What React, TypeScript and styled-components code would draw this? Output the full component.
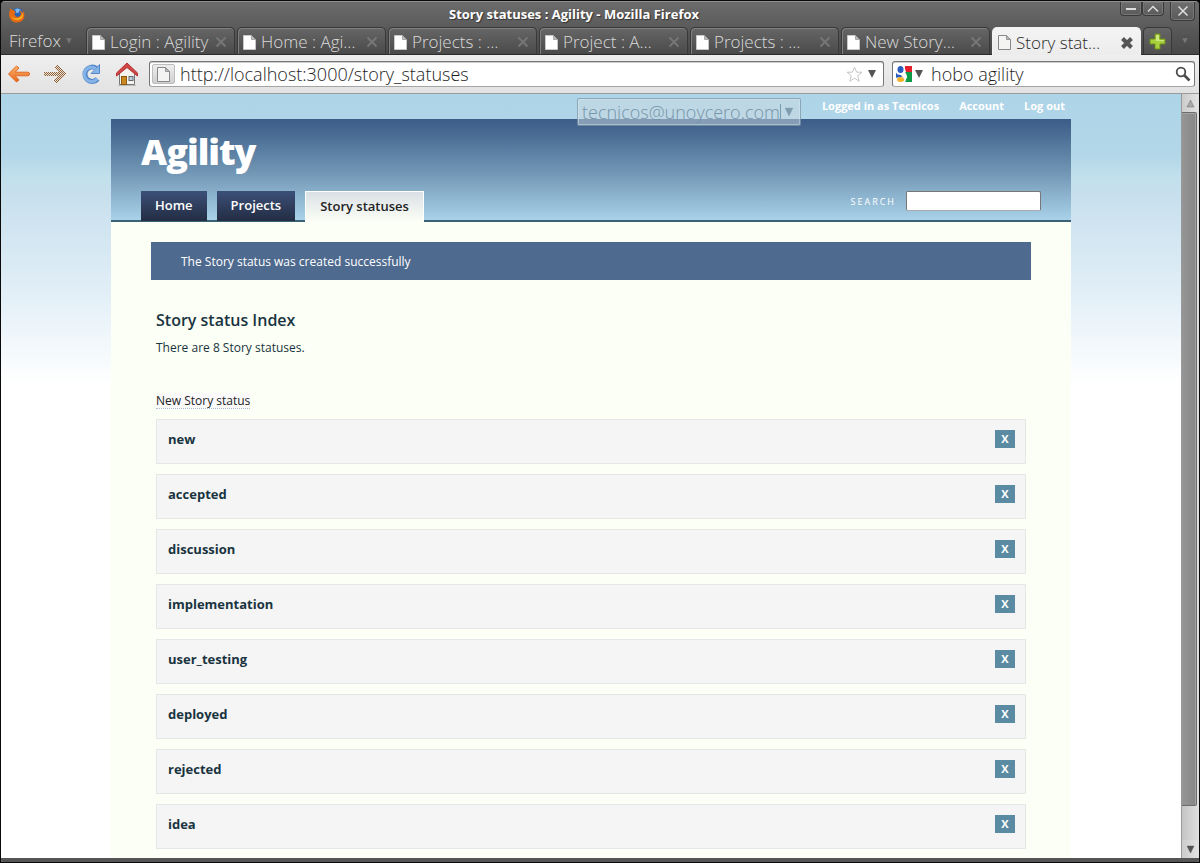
import React from "react";
import styled, { createGlobalStyle } from "styled-components";

const chromeFont = `"Open Sans", "Noto Sans", sans-serif`;
const pageFont = `"Open Sans", "Noto Sans", sans-serif`;

const GlobalStyle = createGlobalStyle`
  *, *::before, *::after { box-sizing: border-box; }
  body { margin: 0; background: #000; }
  button, input, select { font: inherit; }
`;

/* ---------- Browser window ---------- */

const Window = styled.div`
  display: flex;
  flex-direction: column;
  min-height: 100vh;
  border: 1px solid #0a0a0a;
  border-radius: 5px 5px 3px 3px;
  background: #555;
  overflow: hidden;
  font-family: ${chromeFont};
  font-size: 17px;
  font-weight: 300;
`;

const TitleBar = styled.header`
  display: grid;
  grid-template-columns: 100px 1fr 152px;
  align-items: center;
  height: 26px;
  border-top: 1px solid #8e8e8e;
  background: linear-gradient(#6b6b6b, #5b5b5b);
`;

const FirefoxMark = styled.svg`
  width: 16px;
  height: 16px;
  margin-left: 8px;
`;

const WindowTitle = styled.h1`
  margin: 0;
  padding-bottom: 2px;
  font-size: 13px;
  line-height: 20px;
  font-weight: 700;
  color: #fff;
  text-align: center;
  text-shadow: 1px 1px 1px #333;
`;

const WindowButtons = styled.div`
  display: flex;
  align-self: start;
  justify-content: flex-end;
  padding-right: 4px;
`;

const WindowButton = styled.button<{ $close?: boolean }>`
  display: flex;
  align-items: center;
  justify-content: center;
  width: ${(p) => (p.$close ? 25 : 22)}px;
  height: ${(p) => (p.$close ? 19 : 14)}px;
  margin-left: ${(p) => (p.$close ? 6 : 0)}px;
  padding: 0;
  border: 1px solid #3a3a3a;
  border-top: 0;
  border-radius: 0 0 4px 4px;
  background: linear-gradient(#6e6e6e, #5a5a5a);
  box-shadow: inset 0 0 0 1px #777;
`;

const TabStrip = styled.nav`
  display: flex;
  align-items: flex-end;
  height: 28px;
  padding-right: 4px;
  background: linear-gradient(#5a5a5a, #484848);
  border-bottom: 1px solid #2c2c2c;
`;

const MenuButton = styled.button`
  display: flex;
  align-items: center;
  gap: 4px;
  width: 85px;
  height: 27px;
  padding: 0 0 0 8px;
  border: 0;
  background: none;
  color: #dcdcdc;
`;

const Tabs = styled.div`
  display: flex;
  flex: 1;
  gap: 2px;
`;

const Tab = styled.div<{ $active?: boolean }>`
  display: flex;
  flex: 1 1 0;
  align-items: center;
  min-width: 0;
  height: ${(p) => (p.$active ? 28 : 27)}px;
  margin-bottom: ${(p) => (p.$active ? -1 : 0)}px;
  padding: 2px 6px 0 4px;
  border: 1px solid ${(p) => (p.$active ? "#f2f2f2" : "#383838")};
  border-bottom: 0;
  border-radius: 5px 5px 0 0;
  background: ${(p) => (p.$active ? "linear-gradient(#f4f4f4, #ececec)" : "linear-gradient(#666, #4a4a4a)")};
  box-shadow: ${(p) => (p.$active ? "none" : "inset 1px 1px 0 #808080")};
  color: ${(p) => (p.$active ? "#2b2b2b" : "#dadada")};
`;

const TabLink = styled.a`
  display: flex;
  flex: 1;
  align-items: center;
  gap: 4px;
  min-width: 0;
  color: inherit;
  text-decoration: none;
  white-space: nowrap;
  line-height: 22px;
`;

const PaperMark = styled.svg`
  flex-shrink: 0;
  width: 15px;
  height: 17px;
`;

const TabClose = styled.button`
  display: flex;
  width: 14px;
  height: 14px;
  padding: 0;
  border: 0;
  background: none;
`;

const StripButton = styled.button<{ $plain?: boolean }>`
  display: flex;
  align-items: center;
  justify-content: center;
  width: ${(p) => (p.$plain ? 21 : 29)}px;
  height: 27px;
  margin-left: 2px;
  padding: 0;
  border: ${(p) => (p.$plain ? "0" : "1px solid #383838")};
  border-bottom: 0;
  border-radius: 5px 5px 0 0;
  background: ${(p) => (p.$plain ? "none" : "linear-gradient(#666, #4e4e4e)")};
`;

const Toolbar = styled.div`
  display: flex;
  align-items: center;
  height: 39px;
  padding: 0 4px;
  border-bottom: 1px solid #9b9b9b;
  background: linear-gradient(#efefef, #e2e2e2);
`;

const ToolButton = styled.button`
  display: flex;
  align-items: center;
  justify-content: center;
  width: 24px;
  height: 28px;
  margin: 0 10px 0 2px;
  padding: 0;
  border: 0;
  background: none;
`;

const Field = styled.div<{ $grow: number }>`
  display: flex;
  flex: ${(p) => p.$grow} 1 0;
  align-items: center;
  min-width: 0;
  height: 26px;
  padding: 0 3px 0 2px;
  border: 1px solid #777;
  border-bottom-color: #a5a5a5;
  border-radius: 3px;
  background: #fff;
  box-shadow: inset 0 1px 0 #ccc;

  & + & { margin-left: 8px; }
`;

const FieldInput = styled.input`
  flex: 1;
  min-width: 0;
  height: 24px;
  padding: 0 0 0 5px;
  border: 0;
  outline: 0;
  background: none;
  color: #1e1e1e;
  font-size: 18px;
`;

const SiteBadge = styled.span`
  display: flex;
  align-items: center;
  justify-content: center;
  width: 23px;
  height: 20px;
  border: 1px solid #bdbdbd;
  border-radius: 2px;
  background: linear-gradient(#eee, #cfcfcf);
`;

const IconButton = styled.button`
  display: flex;
  align-items: center;
  padding: 0 0 0 1px;
  border: 0;
  background: none;
`;

/* ---------- Viewport ---------- */

const Viewport = styled.div`
  display: flex;
  flex: 1;
  padding-right: 1px;
  border-bottom: 4px solid #555;
  background: #e0e0e0;
`;

const Page = styled.div`
  position: relative;
  flex: 1;
  min-width: 0;
  background: #fff linear-gradient(#aed4e8 0, #b2d7e8 60px, #c2e0ec 85px, #c6dfed 95px, #e2eff7 200px, #fff 290px) no-repeat;
  color: #193440;
  font-family: ${pageFont};
  font-size: 12px;
  font-weight: 400;
`;

const Scrollbar = styled.div`
  display: flex;
  flex-direction: column;
  width: 17px;
  border-left: 1px solid #999;
  background: linear-gradient(90deg, #c4c4c4, #dedede);
`;

const ScrollArrow = styled.button`
  display: flex;
  align-items: center;
  justify-content: center;
  height: 18px;
  padding: 0;
  border: 0;
  background: linear-gradient(90deg, #ccc, #e2e2e2);
`;

const ScrollTrack = styled.div`
  display: flex;
  flex: 1;
  flex-direction: column;
  padding-bottom: 34px;
`;

const ScrollThumb = styled.div`
  flex: 1;
  width: 15px;
  border: 1px solid #6c6c6c;
  border-left: 0;
  border-radius: 0 2px 2px 0;
  background: linear-gradient(90deg, #969696, #868686);
  box-shadow: inset -1px 1px 0 #a3a3a3;
`;

const Container = styled.div`
  display: flex;
  flex-direction: column;
  width: 960px;
  max-width: 100%;
  min-height: 100%;
  margin: 0 auto;
`;

const AccountNav = styled.nav`
  display: flex;
  align-items: center;
  justify-content: flex-end;
  gap: 20px;
  height: 25px;
  padding: 0 6px 2px 0;
  font-size: 11px;
  font-weight: 700;
  color: #fff;

  a { color: inherit; text-decoration: none; }
`;

const UserPicker = styled.div`
  position: absolute;
  top: 4px;
  right: 380px;
  display: flex;
  align-items: center;
  width: 224px;
  height: 28px;
  padding: 0 6px 0 1px;
  border: 1px solid rgba(90, 120, 140, 0.5);
  border-radius: 2px;
  background: rgba(205, 218, 226, 0.5);
  box-shadow: inset 0 0 0 1px rgba(225, 238, 244, 0.4);

  select {
    flex: 1;
    min-width: 0;
    height: 26px;
    margin-right: 3px;
    padding: 0 0 0 3px;
    border: 0;
    appearance: none;
    background: linear-gradient(#7c9cae, #7c9cae) right center / 1px 16px no-repeat;
    color: #7595a8;
    font-family: ${chromeFont};
    font-size: 18px;
    font-weight: 300;
    line-height: 26px;
  }
`;

const SiteHeader = styled.header`
  display: flex;
  flex-direction: column;
  justify-content: space-between;
  height: 103px;
  padding: 10px 30px 0;
  border-bottom: 2px solid #3a6174;
  background: linear-gradient(#3b5d88, #44668f 10%, #6e93b2 50%, #a9d1e8);
`;

const SiteName = styled.a`
  align-self: flex-start;
  color: #fff;
  font-size: 36px;
  font-weight: 800;
  line-height: 46px;
  letter-spacing: -1px;
  text-decoration: none;
`;

const HeaderRow = styled.div`
  display: flex;
  align-items: flex-start;
  justify-content: space-between;
  height: 29px;
`;

const SiteTabs = styled.nav`
  display: flex;
  align-items: flex-start;
  gap: 10px;
`;

const SiteTab = styled.a<{ $active?: boolean }>`
  height: ${(p) => (p.$active ? 31 : 30)}px;
  padding: 0 14px;
  border: ${(p) => (p.$active ? "1px solid #fff" : "0")};
  border-bottom: 0;
  background: ${(p) => (p.$active ? "linear-gradient(#dbe0e6, #fcfff5)" : "linear-gradient(#3c5078, #232c42)")};
  color: ${(p) => (p.$active ? "#222" : "#fff")};
  font-size: 13px;
  font-weight: 600;
  line-height: 29px;
  text-decoration: none;
`;

const SearchForm = styled.form`
  display: flex;
  align-items: center;
  gap: 10px;

  label {
    color: #fff;
    font-size: 9px;
    letter-spacing: 2px;
  }

  input {
    width: 135px;
    height: 20px;
    padding: 0 4px;
    border: 1px solid #777;
    border-bottom-color: #aaa;
    border-radius: 2px;
    background: #fff;
    font-size: 12px;
  }
`;

const Content = styled.main`
  flex: 1;
  padding: 20px 40px 8px;
  background: #fcfff5;
`;

const Flash = styled.div`
  height: 38px;
  padding: 1px 30px 0;
  background: #4e6a8f;
  color: #fff;
  line-height: 38px;
`;

const Section = styled.section`
  padding: 27px 5px 0;
`;

const Heading = styled.h2`
  margin: 0;
  font-size: 16px;
  font-weight: 600;
  line-height: 26px;
`;

const Count = styled.p`
  margin: 5px 0 34px;
  line-height: 20px;
`;

const NewLink = styled.a`
  display: inline-block;
  border-bottom: 1px dotted #aebccb;
  background: #fafafa;
  color: #222;
  line-height: 15px;
  text-decoration: none;
`;

const StatusList = styled.ul`
  display: flex;
  flex-direction: column;
  gap: 10px;
  margin: 10px 0 0;
  padding: 0;
  list-style: none;
`;

const StatusCard = styled.li`
  display: flex;
  align-items: flex-start;
  justify-content: space-between;
  height: 45px;
  padding: 10px 10px 0 11px;
  border: 1px solid #e6e6e6;
  background: #f5f5f5;

  a {
    color: #193440;
    font-size: 13px;
    font-weight: 700;
    line-height: 18px;
    text-decoration: none;
  }
`;

const DeleteButton = styled.button`
  width: 20px;
  height: 18px;
  padding: 0;
  border: 0;
  background: #5a8ba2;
  color: #fff;
  font-size: 11px;
  font-weight: 700;
  line-height: 18px;
`;

/* ---------- Icons ---------- */

type ChevronProps = { color?: string; edge?: string; up?: boolean; size?: number };

const Chevron = ({ color = "#444", edge = "#444", up = false, size = 9 }: ChevronProps) => (
  <svg width={size} height={size} viewBox="0 0 9 9" aria-hidden="true">
    <path d={up ? "M4.5 1 8 8H1Z" : "M1 1H8L4.5 8Z"} fill={color} stroke={edge} strokeOpacity=".5" strokeWidth=".7" />
  </svg>
);

const DropArrow = ({ width }: { width: number }) => (
  <svg width={width} height="10" viewBox={`0 0 ${width} 10`} aria-hidden="true">
    <path d={`M${width / 2 - 4} 1h8l-4 8Z`} fill="#555" />
  </svg>
);

const Paper = ({ outlined = false }: { outlined?: boolean }) => (
  <PaperMark viewBox="0 0 15 17" aria-hidden="true">
    <path d="M1.5 1.5h8l4 4v10h-12Z" fill={outlined ? "#f4f4f2" : "#fff"} stroke={outlined ? "#888" : "#c8c8c8"} />
    <path d="M9.5 1.5v4h4Z" fill="#bbb" stroke={outlined ? "#888" : "#999"} strokeWidth=".8" />
  </PaperMark>
);

const Cross = ({ bold = false }: { bold?: boolean }) => (
  <svg width="14" height="14" viewBox="0 0 14 14" aria-hidden="true">
    {bold ? (
      <path d="m2.5 2.5 9 9m0-9-9 9" stroke="#555" strokeWidth="4" />
    ) : (
      <path d="m2.5 2.5 9 9m0-9-9 9" stroke="#767676" strokeWidth="2" />
    )}
  </svg>
);

const FirefoxLogo = () => (
  <FirefoxMark viewBox="0 0 16 16" aria-hidden="true">
    <circle cx="8.4" cy="7.4" r="6.4" fill="#2a62b4" />
    <path d="M6 2.2C8 .8 11 1.4 12 3.600c-2-.6-2.500.5-1.500 1.600l-3 1Z" fill="#79b8ec" />
    <path d="M1.200 1.300 3 3.200 5 2.800c0 1 .4 1.800 1.600 2.300L5.500 7c.3 3 4 4 5.800 1.600 1-1.800.3-3.600-.7-5.200 1.300.3 2.500 1.300 3 2.500l.3-2.500c3.500 5.500.7 12.100-5.800 12.200C2.500 15.600-.8 10.500.4 5Z" fill="#e66a12" />
    <path d="M13.900 5.500c1 4-1.500 7.400-5.700 7.500-3 0-5-1.500-5.600-4 1.600 2.400 4 3 6.500 2.300 2.600-.7 4.300-2.800 4.800-5.800Z" fill="#fbbd28" />
  </FirefoxMark>
);

const BackIcon = () => (
  <svg width="24" height="22" viewBox="0 0 24 22" aria-hidden="true">
    <defs>
      <linearGradient id="orange" x2="0" y2="1">
        <stop stopColor="#fbb46b" />
        <stop offset="1" stopColor="#e8661b" />
      </linearGradient>
    </defs>
    <path d="M9.500 3 1.500 11l8 8 2.500-2-3.800-4.200H21q1.500-.2 1.500-1.800T21 9.200H8.200L12 5Z" fill="url(#orange)" stroke="#e06a26" strokeLinejoin="round" />
  </svg>
);

const ForwardIcon = () => (
  <svg width="24" height="22" viewBox="0 0 24 22" aria-hidden="true">
    <defs>
      <pattern id="stipple" width="2" height="2" patternUnits="userSpaceOnUse">
        <rect width="2" height="2" fill="#e6dfd8" />
        <path d="M0 0h1v1H0ZM1 1h1v1H1Z" fill="#94643a" />
      </pattern>
    </defs>
    <path d="M14 2 23 11 14 20l-3-2.500 4-4.300H3q-2-.2-2-2.200t2-2.200h12L11 4.500Z" fill="url(#stipple)" shapeRendering="crispEdges" />
  </svg>
);

const ReloadIcon = () => (
  <svg width="22" height="22" viewBox="0 0 22 22" aria-hidden="true">
    <path d="M16.500 5.500A7.200 7.200 0 1 0 17.600 16" fill="none" stroke="#5588c8" strokeWidth="5" />
    <path d="M19.500 1.500v9H11l3-3 3.500-3.500Z" fill="#86b4e8" stroke="#5588c8" strokeLinejoin="round" />
    <path d="M16 5.800A7.200 7.200 0 1 0 17.300 15.700" fill="none" stroke="#86b4e8" strokeWidth="3" />
  </svg>
);

const HomeIcon = () => (
  <svg width="24" height="26" viewBox="0 0 24 26" aria-hidden="true">
    <path d="M4.500 12 12 5l7.500 7v11.500h-15Z" fill="#f3f3f0" stroke="#777" />
    <rect x="6.500" y="15.500" width="5" height="8" fill="#c88a20" stroke="#8a5a10" />
    <rect x="14" y="15.500" width="4" height="4" fill="#b9cfe4" stroke="#666" />
    <path d="M12 2 1.500 12v3L12 6.500 22.500 15v-3Z" fill="#cf4848" stroke="#b83030" strokeLinejoin="round" />
    <path d="M3 24.500h18" stroke="#bbb" />
  </svg>
);

const StarIcon = () => (
  <svg width="17" height="17" viewBox="0 0 17 17" aria-hidden="true">
    <path d="m8.500 1.200 2.200 5h5.200l-4.200 3.600 1.500 5.500-4.700-3.200-4.700 3.200 1.500-5.500L1.100 6.200h5.200Z" fill="#fff" stroke="#c4c4c4" strokeLinejoin="round" />
  </svg>
);

const GoogleIcon = () => (
  <svg width="16" height="16" viewBox="0 0 16 16" aria-hidden="true">
    <path d="M8 0h8v6h-6Z" fill="#e5202a" />
    <path d="M9 6h7v10H9l2-5Z" fill="#0f9a48" />
    <path d="M0 0h9L9 6l2 4-2 6H0Z" fill="#fff" />
    <ellipse cx="4.500" cy="3.500" rx="3" ry="3.500" fill="#2a5dc0" />
    <path d="M0 6.500q1 2.500 5 2.500l1 2-6 .8Z" fill="#2a5dc0" />
    <ellipse cx="4.600" cy="13.500" rx="3.600" ry="2.500" fill="#f5b325" />
    <path d="M6 10q2.500 1 2 3" fill="none" stroke="#ddd" />
  </svg>
);

const MagnifierIcon = () => (
  <svg width="16" height="16" viewBox="0 0 16 16" aria-hidden="true">
    <circle cx="6" cy="6" r="4.300" fill="none" stroke="#4a4a4a" strokeWidth="1.800" />
    <path d="m9 9 5.500 5.500" stroke="#4a4a4a" strokeWidth="2.600" />
  </svg>
);

const PlusIcon = () => (
  <svg width="17" height="17" viewBox="0 0 17 17" aria-hidden="true">
    <path d="M6 1h5v5h5v5h-5v5H6v-5H1V6h5Z" fill="#a8cf3c" stroke="#6c8f1c" />
    <path d="M7 2h3v5h5v1H7Z" fill="#cde67e" />
  </svg>
);

/* ---------- Data ---------- */

const tabs = [
  "Login : Agility",
  "Home : Agi…",
  "Projects : …",
  "Project : A…",
  "Projects : …",
  "New Story…",
  "Story stat…",
];

const statuses = ["new", "accepted", "discussion", "implementation", "user_testing", "deployed", "rejected", "idea"];

export default function App() {
  return (
    <>
      <GlobalStyle />
      <Window>
        <TitleBar>
          <FirefoxLogo />
          <WindowTitle>Story statuses : Agility - Mozilla Firefox</WindowTitle>
          <WindowButtons>
            <WindowButton aria-label="Minimize">
              <svg width="12" height="8" viewBox="0 0 12 8"><path d="M1 4h10" stroke="#ddd" strokeWidth="2" /></svg>
            </WindowButton>
            <WindowButton aria-label="Maximize">
              <svg width="12" height="8" viewBox="0 0 12 8"><path d="m1 6.500 5-5 5 5" fill="none" stroke="#ddd" strokeWidth="1.500" /></svg>
            </WindowButton>
            <WindowButton $close aria-label="Close">
              <svg width="12" height="12" viewBox="0 0 12 12"><path d="m1.500 1.500 9 9m0-9-9 9" stroke="#ddd" strokeWidth="1.500" /></svg>
            </WindowButton>
          </WindowButtons>
        </TitleBar>

        <TabStrip aria-label="Browser tabs">
          <MenuButton>Firefox <Chevron color="#777" size={8} /></MenuButton>
          <Tabs>
            {tabs.map((title, i) => {
              const active = i === tabs.length - 1;
              return (
                <Tab key={i} $active={active}>
                  <TabLink href="#"><Paper outlined={active} />{title}</TabLink>
                  <TabClose aria-label="Close tab"><Cross bold={active} /></TabClose>
                </Tab>
              );
            })}
          </Tabs>
          <StripButton aria-label="New tab"><PlusIcon /></StripButton>
          <StripButton $plain aria-label="List all tabs"><Chevron color="#777" size={8} /></StripButton>
        </TabStrip>

        <Toolbar>
          <ToolButton aria-label="Back"><BackIcon /></ToolButton>
          <ToolButton aria-label="Forward"><ForwardIcon /></ToolButton>
          <ToolButton aria-label="Reload"><ReloadIcon /></ToolButton>
          <ToolButton aria-label="Home"><HomeIcon /></ToolButton>
          <Field $grow={728}>
            <SiteBadge><Paper outlined /></SiteBadge>
            <FieldInput aria-label="Address" defaultValue="http://localhost:3000/story_statuses" />
            <IconButton aria-label="Bookmark"><StarIcon /></IconButton>
            <IconButton aria-label="History"><DropArrow width={16} /></IconButton>
          </Field>
          <Field $grow={296}>
            <IconButton aria-label="Search engine">
              <GoogleIcon />
              <DropArrow width={14} />
            </IconButton>
            <FieldInput aria-label="Web search" defaultValue="hobo agility" />
            <IconButton aria-label="Go"><MagnifierIcon /></IconButton>
          </Field>
        </Toolbar>

        <Viewport>
          <Page>
            <Container>
              <AccountNav aria-label="Account">
                <a href="#">Logged in as Tecnicos</a>
                <a href="#">Account</a>
                <a href="#">Log out</a>
              </AccountNav>
              <SiteHeader>
                <SiteName href="#">Agility</SiteName>
                <HeaderRow>
                  <SiteTabs aria-label="Main">
                    <SiteTab href="#">Home</SiteTab>
                    <SiteTab href="#">Projects</SiteTab>
                    <SiteTab href="#" $active>Story statuses</SiteTab>
                  </SiteTabs>
                  <SearchForm>
                    <label htmlFor="site-search">SEARCH</label>
                    <input id="site-search" type="text" />
                  </SearchForm>
                </HeaderRow>
              </SiteHeader>
              <Content>
                <Flash role="status">The Story status was created successfully</Flash>
                <Section>
                  <Heading>Story status Index</Heading>
                  <Count>There are 8 Story statuses.</Count>
                  <NewLink href="#">New Story status</NewLink>
                  <StatusList>
                    {statuses.map((name) => (
                      <StatusCard key={name}>
                        <a href="#">{name}</a>
                        <DeleteButton aria-label={`Delete ${name}`}>X</DeleteButton>
                      </StatusCard>
                    ))}
                  </StatusList>
                </Section>
              </Content>
            </Container>
            <UserPicker>
              <select aria-label="Current user">
                <option>tecnicos@unoycero.com</option>
              </select>
              <Chevron color="#7f9dae" edge="#7f9dae" size={10} />
            </UserPicker>
          </Page>
          <Scrollbar>
            <ScrollArrow aria-label="Scroll up"><Chevron up color="#aaa" /></ScrollArrow>
            <ScrollTrack><ScrollThumb /></ScrollTrack>
            <ScrollArrow aria-label="Scroll down"><Chevron color="#555" /></ScrollArrow>
          </Scrollbar>
        </Viewport>
      </Window>
    </>
  );
}
